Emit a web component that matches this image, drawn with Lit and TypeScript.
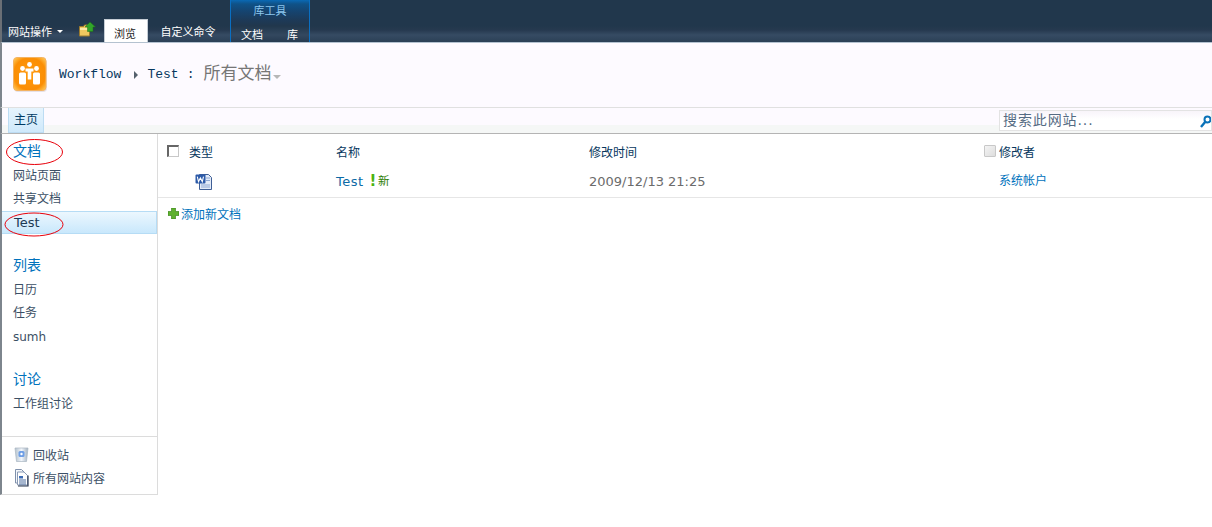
import { LitElement, html, css } from "lit";
import { customElement } from "lit/decorators.js";

@customElement("app-root")
export class AppRoot extends LitElement {
  static styles = css`
    :host { display: block; width: 1212px; height: 527px; background: #fff; overflow: hidden; font-family: "DejaVu Sans", "Noto Sans CJK SC", sans-serif; font-size: 12px; color: #3b4f65; position: relative; }
    * { box-sizing: border-box; }
    .ribbon { height: 43px; display: flex; align-items: flex-end; background: linear-gradient(#21374c 0, #21374c 26px, #26394f 30px, #364b63 35px, #2a3e54 43px); border-left: 2px solid #6a6f75; border-bottom: 1px solid #b4c2d0; }
    .site-act { color: #fff; width: 77px; padding: 0 0 0 6px; height: 22px; display: flex; align-items: center; gap: 5px; font-size: 11px; }
    .caret-w { width: 0; height: 0; border-left: 3px solid transparent; border-right: 3px solid transparent; border-top: 3px solid #fff; }
    .up { width: 25px; height: 26px; display: flex; align-items: flex-start; padding-top: 6px; align-self: flex-end; }
    .tab-active { width: 44px; height: 23px; background: #fff; border: 1px solid #c5cdd5; border-bottom: 0; display: flex; align-items: center; justify-content: center; color: #222; font-size: 11px; padding: 3px 2px 0 0; }
    .tab { width: 82px; height: 23px; display: flex; align-items: center; justify-content: center; color: #fff; font-size: 11px; padding: 1px 2px 0 0; }
    .tools { width: 80px; height: 42px; border-left: 1px solid #0a6fc2; border-right: 1px solid #0a6fc2; display: flex; flex-direction: column; background: linear-gradient(#0a69b4 0, #0f5288 4px, #16436e 12px, #1d3a58 20px, #21374c 26px, #33485f 35px, #263a50 42px); }
    .tools-title { height: 23px; color: #8cc6ee; text-align: center; font-size: 11px; line-height: 23px; }
    .tools-tabs { flex: 1; display: flex; color: #fff; font-size: 11px; align-items: center; padding-top: 2px; }
    .doc-tab { margin-left: 10px; width: 46px; }
    .head { height: 64px; background: #fdfaff; display: flex; align-items: center; border-left: 2px solid #7d858d; padding-left: 11px; }
    .logo { width: 34px; height: 35px; margin-right: 12px; margin-top: -2px; }
    .crumb { font-family: "Liberation Mono", monospace; color: #07375e; font-size: 13px; display: flex; align-items: center; margin-top: -2px; }
    .tri { width: 0; height: 0; border-top: 4px solid transparent; border-bottom: 4px solid transparent; border-left: 4px solid #54606c; margin: 2px 9px 0 13px; }
    .sep { margin: 0 9px 0 8px; }
    .title { font-family: "Noto Sans CJK SC", sans-serif; font-size: 17px; color: #767676; margin-top: -7px; }
    .caret-g { width: 0; height: 0; border-left: 4px solid transparent; border-right: 4px solid transparent; border-top: 4px solid #b7b7b7; margin: 4px 0 0 2px; }
    .nav { height: 27px; background: linear-gradient(#fdfaff 0 17px, #f5f7f6 17px); border-top: 1px solid #e0e0e0; border-bottom: 1px solid #b4b4b4; border-left: 2px solid #7d858d; display: flex; padding-left: 6px; }
    .home { width: 36px; height: 25px; background: linear-gradient(#e6f4fd, #cfe9fb); border: 1px solid #bcdcf3; border-top: 0; color: #003a63; font-size: 12px; display: flex; align-items: center; justify-content: center; padding-bottom: 3px; }
    .search { margin-left: auto; width: 213px; height: 21px; margin-top: 2px; border: 1px solid #e3e3e3; background: linear-gradient(#f8f4fa, #fff 8px); color: #556b83; font-size: 14px; line-height: 18px; padding-left: 3px; display: flex; justify-content: space-between; letter-spacing: .9px; overflow: hidden; }
    .search svg { margin-top: 4px; flex: none; }
    .body { display: flex; align-items: flex-start; }
    .side { width: 158px; height: 361px; border-left: 2px solid #7d858d; border-right: 1px solid #dcdcdc; border-bottom: 1px solid #dcdcdc; display: flex; flex-direction: column; }
    .h { color: #0072bc; font-size: 14px; padding-left: 11px; height: 25px; line-height: 22px; }
    .h.first { margin-top: 6px; }
    .h.gap { margin-top: 20px; }
    .i { padding-left: 11px; height: 23px; line-height: 22px; font-size: 12px; color: #3b4f65; }
    .i.low { padding-top: 1px; }
    .sel { height: 23px; padding-left: 12px; background: linear-gradient(#ecf7fe, #c9e8fc); border: 1px solid #b6dcf5; border-left: 0; line-height: 21px; color: #1c3a55; font-size: 13px; }
    .main { flex: 1; }
    .grid { display: grid; grid-template-columns: 31px 147px 253px 395px 15px 1fr; }
    .hdr { height: 35px; color: #07375e; font-size: 12px; align-items: center; padding-bottom: 1px; }
    .rw { height: 29px; border-bottom: 1px solid #e6e6e6; align-items: start; padding-top: 3px; }
    .cb { margin-left: 9px; width: 12px; height: 12px; border: 1px solid #c8c8c8; border-top: 2px solid #666; border-left: 2px solid #666; }
    .cb2 { width: 12px; height: 12px; border: 1px solid #c8c8c8; background: linear-gradient(135deg, #f4f4f4, #ddd); border-radius: 1px; }
    .doc { margin: 1px 0 0 6px; }
    .name { display: flex; align-items: flex-start; white-space: nowrap; color: #0c6aa6; font-size: 13px; line-height: 16px; padding-top: 2px; letter-spacing: .5px; }
    .bang { color: #4bb20f; font-weight: bold; font-size: 15px; line-height: 16px; margin: -1px 0 0 6px; }
    .new { color: #2b7d00; font-size: 11.5px; line-height: 14px; margin: 0 0 0 1px; }
    .date { color: #6b6b6b; font-size: 13px; line-height: 16px; padding-top: 2px; white-space: nowrap; }
    .user { grid-column: 6; color: #0072bc; white-space: nowrap; margin-top: -1px; }
    .add { display: flex; align-items: center; margin: 7px 0 0 10px; color: #0072bc; gap: 2px; }
    .spacer { flex: 1; }
    .bot { border-top: 1px solid #dcdcdc; height: 58px; padding: 6px 0 0 12px; }
    .bi { display: flex; align-items: center; gap: 3px; height: 23px; }
    .ellipse { position: absolute; pointer-events: none; overflow: visible; }
    .e1 { left: 6px; top: 139px; }
    .e2 { left: 4px; top: 212px; }
  `;

  render() {
    return html`
      <div class="ribbon">
        <div class="site-act">网站操作<span class="caret-w"></span></div>
        <div class="up">
          <svg width="17" height="15" viewBox="0 0 17 15">
            <path d="M.5 4.5h4l1-1.5h5v11H.5z" fill="#f0c860" stroke="#9a7a2e"/>
            <path d="M1 6h10v2H1z" fill="#fbe9a6"/>
            <path d="M11 0l5.5 5H14v4.5H8.5V5H6z" fill="#32a52a" stroke="#1c6f18" stroke-width=".5"/>
          </svg>
        </div>
        <div class="tab-active">浏览</div>
        <div class="tab">自定义命令</div>
        <div class="tools">
          <div class="tools-title">库工具</div>
          <div class="tools-tabs"><span class="doc-tab">文档</span><span>库</span></div>
        </div>
      </div>
      <div class="head">
        <svg class="logo" viewBox="0 0 34 35">
          <defs>
            <radialGradient id="og" cx=".5" cy=".5" r=".65"><stop offset="0" stop-color="#ff9a0c"/><stop offset=".75" stop-color="#fb8e05"/><stop offset="1" stop-color="#ffc24e"/></radialGradient>
          </defs>
          <rect x="1" y="2" width="33" height="33" rx="4" fill="#e6e0e6"/>
          <rect x=".5" y=".5" width="32.5" height="33" rx="3.5" fill="url(#og)" stroke="#f3b261"/>
          <circle cx="16.5" cy="7.5" r="2.4" fill="#fff"/>
          <path d="M12.5 11.5h8v3h-2.2v8h-3.6v-8h-2.2z" fill="#fff"/>
          <circle cx="9.5" cy="11.5" r="2.4" fill="#fff"/>
          <rect x="6" y="15.5" width="7" height="12" rx="1.5" fill="#fff"/>
          <circle cx="23.5" cy="11.5" r="2.4" fill="#fff"/>
          <rect x="20" y="15.5" width="7" height="12" rx="1.5" fill="#fff"/>
        </svg>
        <div class="crumb">Workflow<span class="tri"></span>Test<span class="sep">:</span></div>
        <div class="title">所有文档</div><span class="caret-g"></span>
      </div>
      <div class="nav">
        <div class="home">主页</div>
        <div class="search"><span>搜索此网站...</span>
          <svg width="12" height="14" viewBox="0 0 12 14"><circle cx="8.5" cy="4.5" r="3" fill="none" stroke="#0a72b8" stroke-width="2"/><path d="M6.3 6.8L2 12" stroke="#0a72b8" stroke-width="2.4"/></svg>
        </div>
      </div>
      <div class="body">
        <div class="side">
          <div class="h first">文档</div>
          <div class="i">网站页面</div>
          <div class="i">共享文档</div>
          <div class="sel">Test</div>
          <div class="h gap">列表</div>
          <div class="i">日历</div>
          <div class="i">任务</div>
          <div class="i low">sumh</div>
          <div class="h gap">讨论</div>
          <div class="i">工作组讨论</div>
          <div class="spacer"></div>
          <div class="bot">
            <div class="bi">
              <svg width="16" height="17" viewBox="0 0 16 17">
                <defs><linearGradient id="bk" x1="0" x2="1" y1="0" y2="0"><stop offset="0" stop-color="#b4c2ce"/><stop offset=".5" stop-color="#f2f6fb"/><stop offset="1" stop-color="#a3b2c0"/></linearGradient></defs>
                <path d="M1 2h13l-1.5 13.5h-10z" fill="url(#bk)" stroke="#a9b6c2" stroke-width=".7"/>
                <rect x="4.5" y="5" width="6" height="6" rx="1.5" fill="#6f9fe6"/>
                <circle cx="7.5" cy="8" r="1.2" fill="#fff"/>
              </svg>回收站
            </div>
            <div class="bi">
              <svg width="16" height="18" viewBox="0 0 16 18">
                <path d="M1.5.5h6l3 3V14h-9z" fill="#f4f7fb" stroke="#7f90ab"/>
                <path d="M3.5 3h6.5l3.5 3.5V16H3.5z" fill="#fff" stroke="#8b9bb5"/>
                <path d="M14 6.5V17H4" fill="none" stroke="#27344d" stroke-width="1.2"/>
                <path d="M5 7h4v2.5H5z" fill="#3d6cb5"/>
                <path d="M5 11h7M5 13h7M5 15h7" stroke="#4f6f9f"/>
              </svg>所有网站内容
            </div>
          </div>
        </div>
        <div class="main">
          <div class="grid hdr">
            <span class="cb"></span>
            <span>类型</span>
            <span>名称</span>
            <span>修改时间</span>
            <span class="cb2"></span>
            <span>修改者</span>
          </div>
          <div class="grid rw">
            <span></span>
            <svg class="doc" width="18" height="18" viewBox="0 0 18 18">
              <path d="M4.5 1.5h9l3 3v12h-12z" fill="#e3ebf8" stroke="#3f5f96"/>
              <path d="M11 5h4M11 7.5h4M6 12h9M6 14h9" stroke="#8ea8d2"/>
              <rect x="0.5" y="1.5" width="10" height="9" rx="1" fill="#2c5aa8"/>
              <path d="M2.3 3.6l1.2 5 1.9-3.7 1.9 3.7 1.2-5" stroke="#fff" stroke-width="1.1" fill="none"/>
            </svg>
            <span class="name">Test<span class="bang">!</span><span class="new">新</span></span>
            <span class="date">2009/12/13 21:25</span>
            <span class="user">系统帐户</span>
          </div>
          <div class="add">
            <svg width="11" height="11" viewBox="0 0 11 11"><path d="M3.5 0h4v3.5H11v4H7.5V11h-4V7.5H0v-4h3.5z" fill="#5fb12f" stroke="#2f7a12" stroke-width=".6"/></svg>
            添加新文档
          </div>
        </div>
      </div>
      <svg class="ellipse e1" width="58" height="26"><ellipse cx="28.5" cy="13" rx="28" ry="12.5" fill="none" stroke="#e8000a"/></svg>
      <svg class="ellipse e2" width="60" height="25"><ellipse cx="30" cy="12.5" rx="29" ry="11.5" fill="none" stroke="#e8000a"/></svg>
    `;
  }
}
